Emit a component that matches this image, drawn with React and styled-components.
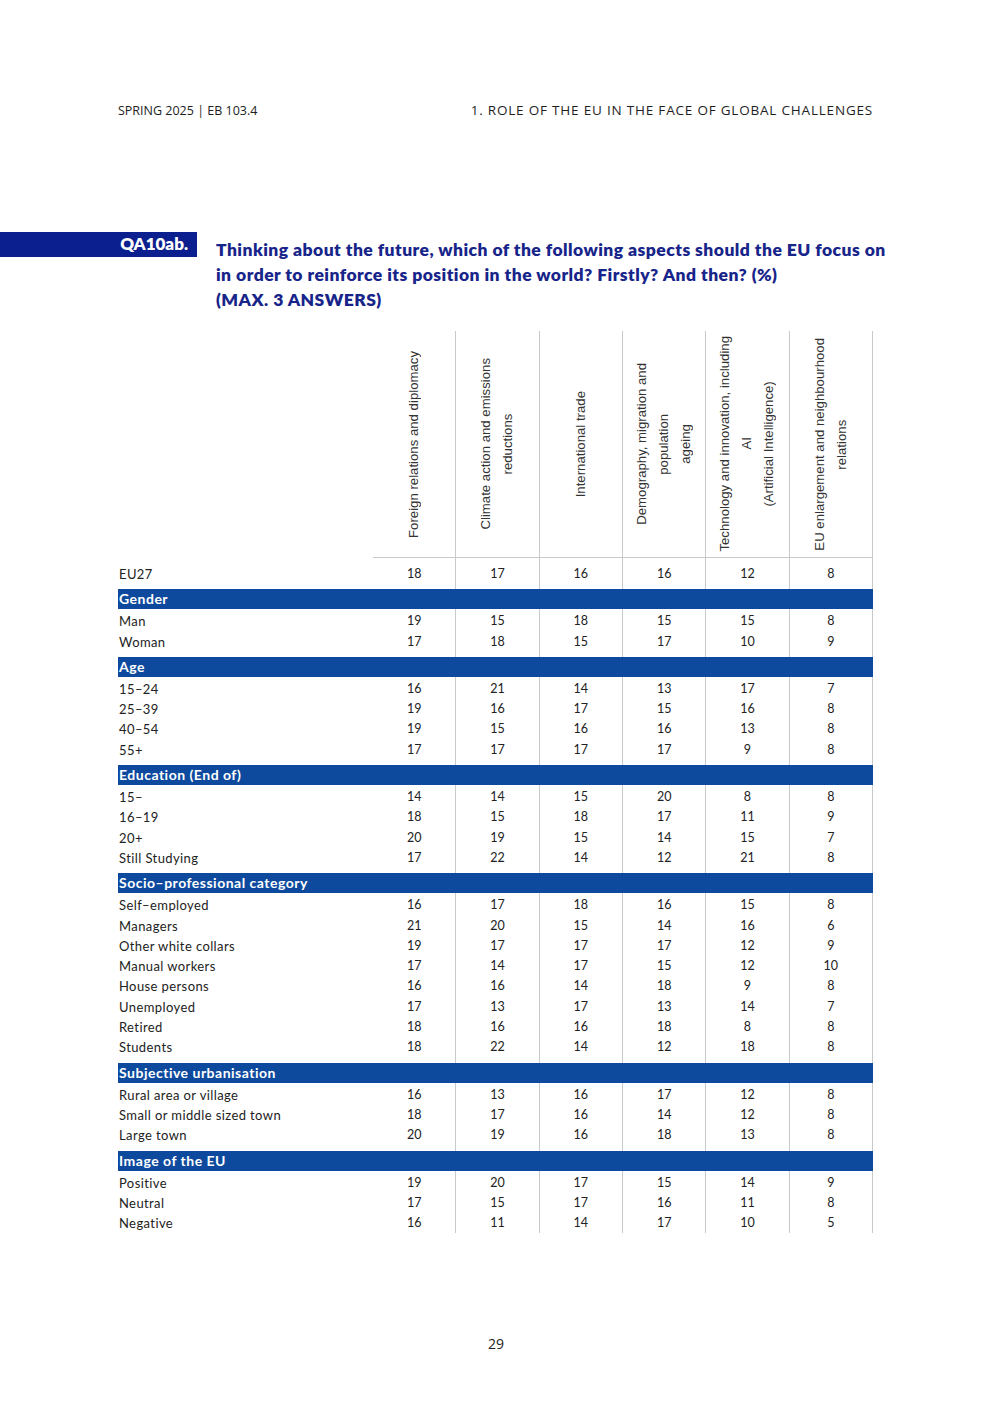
import React from 'react';
import styled, { createGlobalStyle } from 'styled-components';

const GlobalStyle = createGlobalStyle`
    html, body {
        margin: 0;
        padding: 0;
        background: #ffffff;
    }
    body {
        font-family: "Lato", "Liberation Sans", sans-serif;
        color: #222222;
    }
`;

const Page = styled.div`
    width: 992px;
    min-height: 1403px;
    background: #ffffff;
`;

const TopBar = styled.header`
    display: flex;
    justify-content: space-between;
    align-items: baseline;
    padding: 102px 119px 0 118px;
    font-family: "Open Sans", "Liberation Sans", sans-serif;
    font-size: 12.5px;
    line-height: 16px;
    color: #1e1e1e;
`;

const Chapter = styled.span`
    font-size: 13.5px;
    letter-spacing: 0.8px;
`;

const Question = styled.section`
    display: flex;
    align-items: flex-start;
    margin-top: 113px;
`;

const QuestionCode = styled.div`
    flex: 0 0 197px;
    height: 25px;
    box-sizing: border-box;
    padding-right: 9px;
    background: #0b1f8e;
    color: #ffffff;
    font-family: "Lato", sans-serif;
    font-weight: 800;
    font-size: 17px;
    line-height: 23px;
    text-align: right;
`;

const Title = styled.h1`
    margin: 5px 0 0 19px;
    font-family: "Lato", sans-serif;
    font-weight: 800;
    font-size: 17.5px;
    letter-spacing: 0.45px;
    line-height: 25px;
    color: #17248a;
    white-space: nowrap;
`;

const Table = styled.div`
    width: 755px;
    margin: 19px 0 0 118px;
`;

const HeaderRow = styled.div`
    display: grid;
    grid-template-columns: 255px repeat(6, 1fr);
    height: 227px;
`;

const HeaderCell = styled.div`
    display: flex;
    align-items: center;
    justify-content: center;
    box-sizing: border-box;
    border-right: 1px solid #c9c9c9;
    border-bottom: 1px solid #c9c9c9;
`;

const RotatedLabel = styled.span`
    writing-mode: vertical-rl;
    transform: rotate(180deg);
    text-align: center;
    font-family: "Liberation Sans", Arial, sans-serif;
    font-size: 13.2px;
    line-height: 22px;
    color: #333333;
    white-space: nowrap;
`;

const Row = styled.div`
    display: grid;
    grid-template-columns: 255px repeat(6, 1fr);
`;

const Label = styled.div`
    padding-left: 1px;
    padding-top: ${p => (p.$first ? '6px' : '0')};
    font-size: 13px;
    line-height: 20px;
    letter-spacing: 0.4px;
    color: #222222;
    white-space: nowrap;
`;

const Value = styled.div`
    box-sizing: border-box;
    border-right: 1px solid #c9c9c9;
    padding-top: ${p => (p.$first ? '6px' : '0')};
    text-align: center;
    font-size: 12.5px;
    line-height: 20.3px;
    color: #222222;
`;

const SectionRow = styled.div`
    display: grid;
    grid-template-columns: 255px repeat(6, 1fr);
    grid-template-rows: 5px 20px 2px;
`;

const SectionLine = styled.div`
    grid-row: 1 / -1;
    grid-column: ${p => p.$col};
    border-right: 1px solid #c9c9c9;
`;

const Band = styled.div`
    grid-row: 2;
    grid-column: 1 / -1;
    z-index: 1;
    padding-left: 1px;
    background: #0d4a9d;
    color: #ffffff;
    font-weight: 700;
    font-size: 14px;
    line-height: 20px;
    letter-spacing: 0.5px;
    white-space: nowrap;
`;

const PageNumber = styled.footer`
    margin-top: 101px;
    text-align: center;
    font-family: "Open Sans", "Liberation Sans", sans-serif;
    font-size: 14px;
    line-height: 20px;
    color: #222222;
`;

const columns = [
    ['Foreign relations and diplomacy'],
    ['Climate action and emissions', 'reductions'],
    ['International trade'],
    ['Demography, migration and', 'population', 'ageing'],
    ['Technology and innovation, including', 'AI', '(Artificial Intelligence)'],
    ['EU enlargement and neighbourhood', 'relations'],
];

const sections = [
    {
        title: 'Gender',
        rows: [
            ['Man', 19, 15, 18, 15, 15, 8],
            ['Woman', 17, 18, 15, 17, 10, 9],
        ],
    },
    {
        title: 'Age',
        rows: [
            ['15–24', 16, 21, 14, 13, 17, 7],
            ['25–39', 19, 16, 17, 15, 16, 8],
            ['40–54', 19, 15, 16, 16, 13, 8],
            ['55+', 17, 17, 17, 17, 9, 8],
        ],
    },
    {
        title: 'Education (End of)',
        rows: [
            ['15–', 14, 14, 15, 20, 8, 8],
            ['16–19', 18, 15, 18, 17, 11, 9],
            ['20+', 20, 19, 15, 14, 15, 7],
            ['Still Studying', 17, 22, 14, 12, 21, 8],
        ],
    },
    {
        title: 'Socio–professional category',
        rows: [
            ['Self–employed', 16, 17, 18, 16, 15, 8],
            ['Managers', 21, 20, 15, 14, 16, 6],
            ['Other white collars', 19, 17, 17, 17, 12, 9],
            ['Manual workers', 17, 14, 17, 15, 12, 10],
            ['House persons', 16, 16, 14, 18, 9, 8],
            ['Unemployed', 17, 13, 17, 13, 14, 7],
            ['Retired', 18, 16, 16, 18, 8, 8],
            ['Students', 18, 22, 14, 12, 18, 8],
        ],
    },
    {
        title: 'Subjective urbanisation',
        rows: [
            ['Rural area or village', 16, 13, 16, 17, 12, 8],
            ['Small or middle sized town', 18, 17, 16, 14, 12, 8],
            ['Large town', 20, 19, 16, 18, 13, 8],
        ],
    },
    {
        title: 'Image of the EU',
        rows: [
            ['Positive', 19, 20, 17, 15, 14, 9],
            ['Neutral', 17, 15, 17, 16, 11, 8],
            ['Negative', 16, 11, 14, 17, 10, 5],
        ],
    },
];

const DataRow = ({ row, first }) => (
    <Row>
        <Label $first={first}>{row[0]}</Label>
        {row.slice(1).map((v, i) => (
            <Value key={i} $first={first}>{v}</Value>
        ))}
    </Row>
);

const Section = ({ title, rows }) => (
    <>
        <SectionRow>
            {[2, 3, 4, 5, 6, 7].map(c => (
                <SectionLine key={c} $col={c} />
            ))}
            <Band>{title}</Band>
        </SectionRow>
        {rows.map(r => (
            <DataRow key={r[0]} row={r} />
        ))}
    </>
);

const App = () => {
    return (
        <>
            <GlobalStyle />
            <Page>
                <TopBar>
                    <span>SPRING 2025 | EB 103.4</span>
                    <Chapter>1. ROLE OF THE EU IN THE FACE OF GLOBAL CHALLENGES</Chapter>
                </TopBar>
                <Question>
                    <QuestionCode>QA10ab.</QuestionCode>
                    <Title>
                        Thinking about the future, which of the following aspects should the EU focus on
                        <br />
                        in order to reinforce its position in the world? Firstly? And then? (%)
                        <br />
                        (MAX. 3 ANSWERS)
                    </Title>
                </Question>
                <Table>
                    <HeaderRow>
                        <div />
                        {columns.map((lines, i) => (
                            <HeaderCell key={i}>
                                <RotatedLabel>
                                    {lines.map((l, j) => (
                                        <React.Fragment key={j}>
                                            {j > 0 && <br />}
                                            {l}
                                        </React.Fragment>
                                    ))}
                                </RotatedLabel>
                            </HeaderCell>
                        ))}
                    </HeaderRow>
                    <DataRow row={['EU27', 18, 17, 16, 16, 12, 8]} first />
                    {sections.map(s => (
                        <Section key={s.title} title={s.title} rows={s.rows} />
                    ))}
                </Table>
                <PageNumber>29</PageNumber>
            </Page>
        </>
    );
};

export default App;
